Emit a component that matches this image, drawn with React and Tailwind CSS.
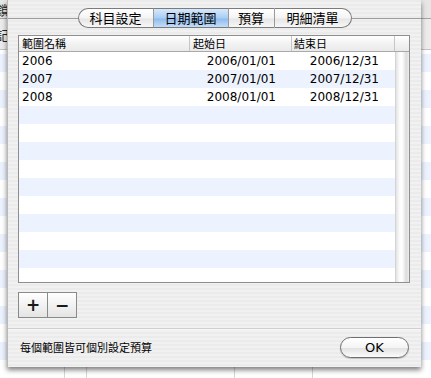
import React from 'react';

const rows = [
    { name: "2006", start: "2006/01/01", end: "2006/12/31" },
    { name: "2007", start: "2007/01/01", end: "2007/12/31" },
    { name: "2008", start: "2008/01/01", end: "2008/12/31" },
];

const tabs = [
    { label: "科目設定", w: "w-[75px]", first: true },
    { label: "日期範圍", w: "w-[75px]", active: true },
    { label: "預算", w: "w-[46px]" },
    { label: "明細清單", w: "w-[78px]", last: true },
];

const cjk = "font-['Noto_Sans_CJK_TC','Noto_Sans_CJK_SC',sans-serif]";
const latin = "font-['DejaVu_Sans','Noto_Sans_CJK_TC',sans-serif]";

const Tab = ({ tab }) => {
    let cls = "h-[20px] flex items-center justify-center text-[13px] text-black border-y border-[#7b7b7b] ";
    cls += tab.w + " ";
    if (tab.active) {
        cls += "bg-[linear-gradient(#d7e8fb,#a9cdf3_50%,#8fbcef_55%,#c3ddf8)] ";
    } else {
        cls += "bg-[linear-gradient(#ffffff,#f4f4f4_50%,#e6e6e6_55%,#f7f7f7)] ";
    }
    if (tab.first) cls += "rounded-l-[10px] border-l ";
    if (tab.last) cls += "rounded-r-[10px] border-r ";
    if (!tab.first) cls += "border-l border-l-[#9a9a9a] ";
    return <div className={cls}>{tab.label}</div>;
};

const App = () => {
    const bodyRows = Array.from({ length: 13 }, (_, i) => rows[i] || null);

    return (
        <div className={"relative w-[431px] h-[378px] overflow-hidden bg-[repeating-linear-gradient(180deg,#ffffff_0px,#ffffff_18px,#edf3fe_18px,#edf3fe_36px)] " + cjk}>
            {/* window behind the sheet */}
            <div className="absolute inset-0 flex flex-col">
                <div className="h-[19px] bg-[#e6e6e6] border-b border-[#a5a5a5] text-[13px] leading-[19px] pl-0 -ml-[4px] text-[#222]">鎖</div>
                <div className="h-[31px] bg-[#ececec] border-b border-[#c4c4c4] text-[13px] leading-[24px] pt-[4px] -ml-[4px] text-[#222]">記</div>
                <div className="flex-1 flex">
                    <div className="w-[65px] border-r border-[#d6d6d6]"></div>
                    <div className="w-[22px] border-r border-[#d6d6d6]"></div>
                    <div className="w-[148px] border-r border-[#d6d6d6]"></div>
                    <div className="w-[78px] border-r border-[#d6d6d6]"></div>
                </div>
            </div>

            {/* sheet */}
            <div className="absolute left-[7px] top-0 w-[414px] h-[367px] flex flex-col border-l border-[#b9b9b9] bg-[repeating-linear-gradient(180deg,#ebebeb_0px,#ebebeb_2px,#f1f1f1_2px,#f1f1f1_4px)] shadow-[0_3px_5px_rgba(0,0,0,0.5)]">
                <div className="flex items-center mt-[8px] h-[20px]">
                    <div className="flex-1 h-px bg-[#9d9d9d]"></div>
                    <div className="flex">
                        {tabs.map((t) => <Tab key={t.label} tab={t} />)}
                    </div>
                    <div className="flex-1 h-px bg-[#9d9d9d]"></div>
                </div>

                <div className="mt-[7px] ml-[10px] mr-[11px] h-[248px] border border-[#8e8e8e] bg-white flex flex-col overflow-hidden">
                    <div className="h-[16px] flex border-b border-[#a9a9a9] bg-[linear-gradient(#ffffff,#f3f3f3_50%,#e9e9e9)] text-[11px] leading-[15px] text-black">
                        <div className="w-[171px] pl-[3px] border-r border-[#c6c6c6]">範圍名稱</div>
                        <div className="w-[102px] pl-[3px] border-r border-[#c6c6c6]">起始日</div>
                        <div className="w-[103px] pl-[2px] border-r border-[#c6c6c6]">結束日</div>
                        <div className="flex-1"></div>
                    </div>
                    <div className="flex-1 flex overflow-hidden">
                        <div className="w-[376px] flex flex-col">
                            {bodyRows.map((r, i) => (
                                <div key={i} className={"h-[18px] shrink-0 flex items-center text-[12px] text-black " + latin + (i % 2 === 1 ? " bg-[#edf3fe]" : " bg-white")}>
                                    {r && (
                                        <>
                                            <div className="w-[171px] pl-[3px]">{r.name}</div>
                                            <div className="w-[102px] text-right pr-[16px]">{r.start}</div>
                                            <div className="w-[103px] text-right pr-[16px]">{r.end}</div>
                                        </>
                                    )}
                                </div>
                            ))}
                        </div>
                        <div className="flex-1 border-l border-[#d4d4d4] bg-[linear-gradient(to_right,#e2e2e2,#fafafa_25%,#ffffff_45%,#dcdcdc_80%,#eeeeee)]"></div>
                    </div>
                </div>

                <div className="mt-[9px] ml-[10px] flex">
                    <div className="w-[30px] h-[26px] border border-[#8a8a8a] bg-[linear-gradient(#ffffff,#f2f2f2_50%,#e4e4e4)] flex items-center justify-center text-[17px] font-bold text-[#1a1a1a] leading-none font-['DejaVu_Sans',sans-serif]">+</div>
                    <div className="w-[29px] h-[26px] border border-l-0 border-[#8a8a8a] bg-[linear-gradient(#ffffff,#f2f2f2_50%,#e4e4e4)] flex items-center justify-center text-[17px] font-bold text-[#1a1a1a] leading-none font-['DejaVu_Sans',sans-serif]">−</div>
                </div>

                <div className="mt-[10px] h-[2px] border-t border-[#cfcfcf] bg-[#f7f7f7]"></div>

                <div className="flex-1 flex items-center justify-between pl-[12px] pr-[12px] pb-[2px]">
                    <div className="text-[11px] text-black">每個範圍皆可個別設定預算</div>
                    <div className={"w-[69px] h-[21px] rounded-full border border-[#6f6f6f] bg-[linear-gradient(#ffffff,#f4f4f4_50%,#e3e3e3_55%,#fbfbfb)] flex items-center justify-center text-[13px] text-black shadow-[0_1px_1px_rgba(0,0,0,0.2)] " + latin}>OK</div>
                </div>
            </div>
        </div>
    );
};

export default App;
